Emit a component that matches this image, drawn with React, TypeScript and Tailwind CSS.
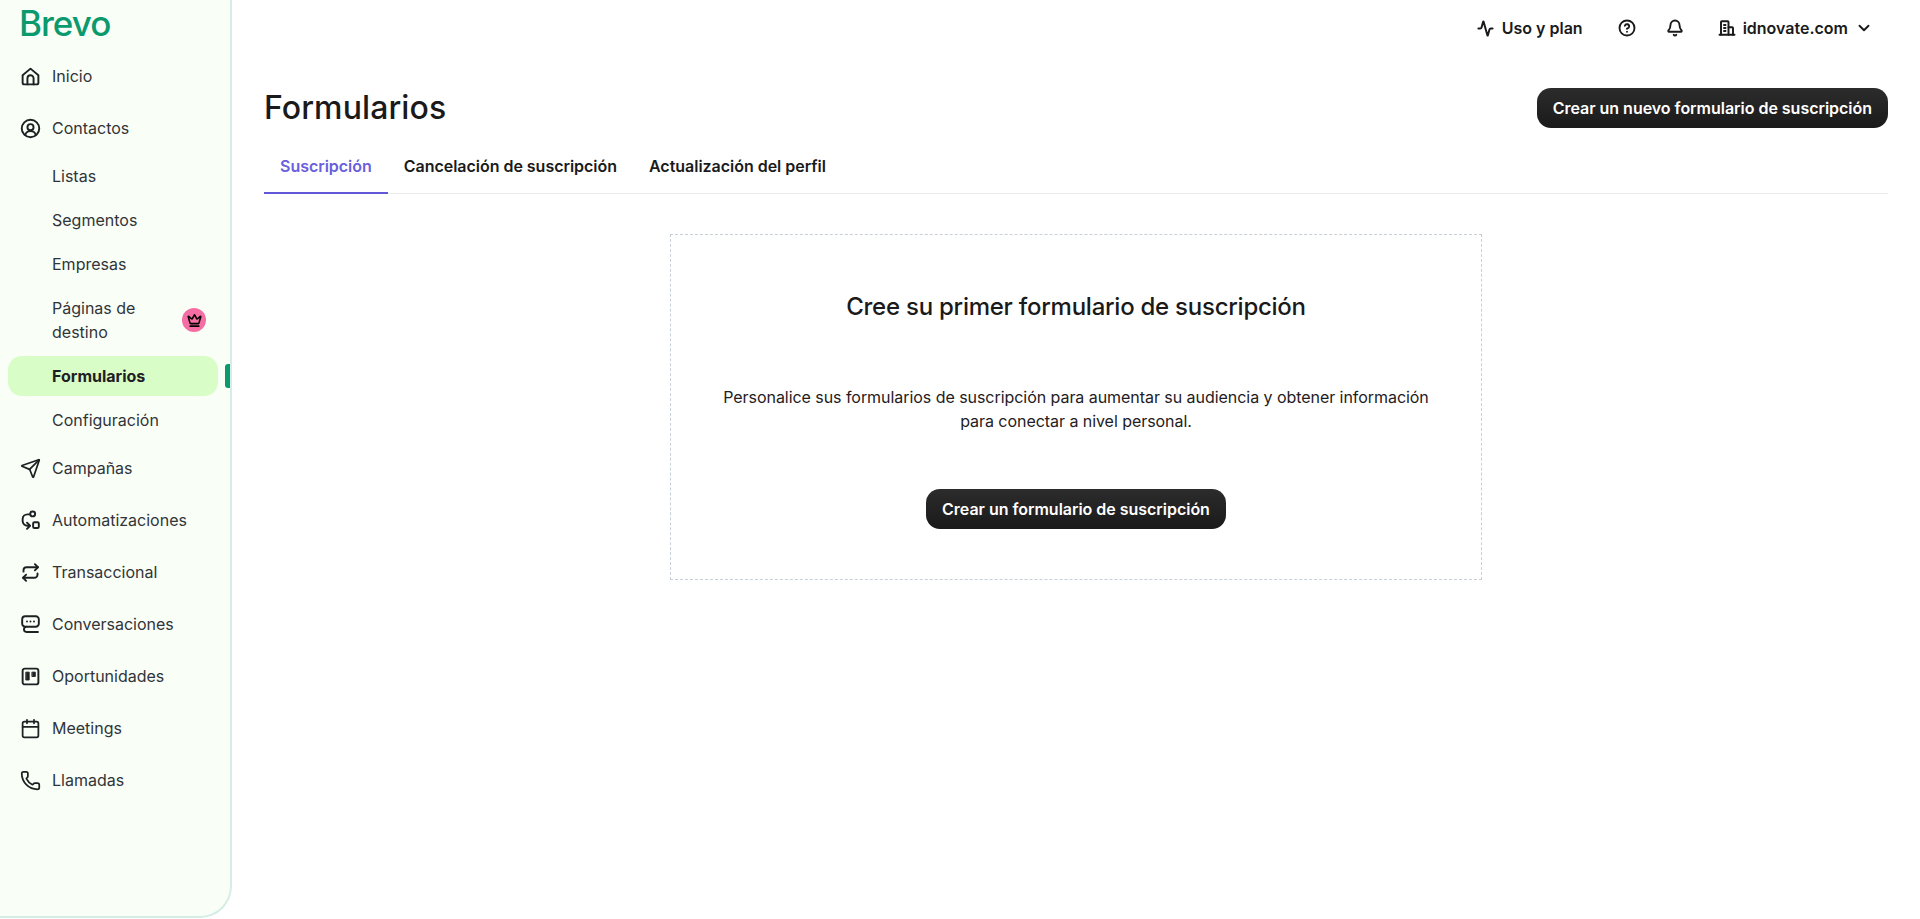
import { Activity, Bell, Calendar, ChevronDown, CircleHelp, Crown, Phone, Send } from 'lucide-react';

type IconProps = { className?: string };

function Svg({ className, children }: IconProps & { children: React.ReactNode }) {
  return (
    <svg
      className={className}
      viewBox="0 0 24 24"
      fill="none"
      stroke="currentColor"
      strokeWidth={2.2}
      strokeLinecap="round"
      strokeLinejoin="round"
    >
      {children}
    </svg>
  );
}

const HomeIcon = ({ className }: IconProps) => (
  <Svg className={className}>
    <path d="M3 10.5 12 3l9 7.5V19a2 2 0 0 1-2 2H5a2 2 0 0 1-2-2z" />
    <path d="M8.5 21v-7a3.5 3.5 0 0 1 7 0v7" />
  </Svg>
);

const ContactIcon = ({ className }: IconProps) => (
  <Svg className={className}>
    <circle cx="12" cy="12" r="10" />
    <circle cx="12" cy="10.5" r="3.5" />
    <path d="M6 19.5c.6-3 3-4.5 6-4.5s5.400 1.500 6 4.500" />
  </Svg>
);

const AutomationIcon = ({ className }: IconProps) => (
  <Svg className={className}>
    <circle cx="14.500" cy="4.500" r="2.800" />
    <rect x="15" y="14" width="6.500" height="6.500" rx="1.500" />
    <path d="M11.500 5H8.500A5.500 5.500 0 0 0 3 10.500v2A5.500 5.500 0 0 0 8.500 18H11" />
    <path d="m8 14.500 3.500 3.500L8 21.500" />
  </Svg>
);

const TransactionIcon = ({ className }: IconProps) => (
  <Svg className={className}>
    <path d="m17 2.500 3.500 3.500L17 9.500" />
    <path d="M4 11V9.500A3.500 3.500 0 0 1 7.500 6h13" />
    <path d="m7 21.500-3.500-3.500L7 14.500" />
    <path d="M20 13v1.500a3.500 3.500 0 0 1-3.500 3.500h-13" />
  </Svg>
);

const ChatIcon = ({ className }: IconProps) => (
  <Svg className={className}>
    <path d="M7 14.500H6a3.500 3.500 0 0 1-3.500-3.500V6A3.500 3.500 0 0 1 6 2.500h12A3.500 3.500 0 0 1 21.500 6v5a3.500 3.500 0 0 1-3.500 3.500H7.500a3 3 0 0 0 0 6h13" />
    <path d="M8 8.500h.01M12 8.500h.01M16 8.500h.01" />
  </Svg>
);

const BoardIcon = ({ className }: IconProps) => (
  <Svg className={className}>
    <rect x="3" y="3" width="18" height="18" rx="2.500" />
    <rect x="7" y="7" width="3.500" height="9" fill="currentColor" strokeWidth={1} />
    <rect x="14" y="7" width="3.500" height="5" fill="currentColor" strokeWidth={1} />
  </Svg>
);

const BuildingIcon = ({ className }: IconProps) => (
  <Svg className={className}>
    <path d="M4 21V4a1 1 0 0 1 1-1h8a1 1 0 0 1 1 1v17" strokeWidth={2.6} />
    <path d="M14 11h5a1 1 0 0 1 1 1v9" strokeWidth={2.6} />
    <path d="M2 21h20" strokeWidth={2.6} />
    <path d="M8 8h2M8 12h2M8 16h2" strokeWidth={2.6} />
  </Svg>
);

function NavItem({ label, icon: Icon }: { label: string; icon: React.ComponentType<IconProps> }) {
  return (
    <div className="flex h-[52px] items-center pl-[20px]">
      <Icon className="h-[21px] w-[21px] shrink-0 text-[#1f2023]" />
      <span className="ml-[11px] text-[16px] text-[#31343a]">{label}</span>
    </div>
  );
}

function SubItem({ label }: { label: string }) {
  return (
    <div className="flex h-[44px] items-center pl-[52px] text-[16px] text-[#31343a]">{label}</div>
  );
}

function DarkButton({ label }: { label: string }) {
  return (
    <button className="flex h-[40px] items-center rounded-[14px] bg-gradient-to-b from-[#2c2c2c] to-[#1a1a1a] px-4 text-[16px] font-semibold tracking-[-0.025px] text-white">
      {label}
    </button>
  );
}

function Sidebar() {
  return (
    <aside className="h-[918px] w-[232px] shrink-0 rounded-br-[32px] border-r-2 border-b-2 border-[#d6ece6] bg-[#f9fff6]">
      <div className="flex h-[50px] items-start pl-[19px] pt-[1px] text-[35px] leading-[44px] font-medium tracking-[-1px] text-[#0b996e]">
        Brevo
      </div>
      <NavItem label="Inicio" icon={HomeIcon} />
      <NavItem label="Contactos" icon={ContactIcon} />
      <SubItem label="Listas" />
      <SubItem label="Segmentos" />
      <SubItem label="Empresas" />
      <div className="flex h-[68px] items-center pl-[52px] text-[16px] leading-[24px] text-[#31343a]">
        <span className="w-[110px]">Páginas de destino</span>
        <span className="ml-[20px] flex h-[24px] w-[24px] items-center justify-center rounded-full bg-[#f56ea3]">
          <Crown className="h-[15px] w-[15px] text-black" strokeWidth={2.500} />
        </span>
      </div>
      <div className="relative h-[44px] pt-[2px]">
        <div className="ml-[8px] flex h-[40px] w-[210px] items-center rounded-[14px] bg-[#d8fdc7] pl-[44px] text-[16px] font-bold text-[#1f2023]">
          Formularios
        </div>
        <div className="absolute right-0 top-[10px] h-[24px] w-[5px] rounded-l-[3px] bg-[#0b996e]" />
      </div>
      <SubItem label="Configuración" />
      <NavItem label="Campañas" icon={Send} />
      <NavItem label="Automatizaciones" icon={AutomationIcon} />
      <NavItem label="Transaccional" icon={TransactionIcon} />
      <NavItem label="Conversaciones" icon={ChatIcon} />
      <NavItem label="Oportunidades" icon={BoardIcon} />
      <NavItem label="Meetings" icon={Calendar} />
      <NavItem label="Llamadas" icon={Phone} />
    </aside>
  );
}

function TopBar() {
  return (
    <div className="flex h-[56px] items-center justify-end pr-[47px] text-[16px] font-semibold text-[#1a1a1a]">
      <Activity className="h-[17px] w-[17px]" strokeWidth={2.800} />
      <span className="ml-[8px]">Uso y plan</span>
      <CircleHelp className="ml-[35px] h-[18px] w-[18px]" strokeWidth={2.500} />
      <Bell className="ml-[30px] h-[18px] w-[18px]" strokeWidth={2.500} />
      <BuildingIcon className="ml-[34px] h-[18px] w-[18px]" />
      <span className="ml-[7px]">idnovate.com</span>
      <ChevronDown className="ml-[7px] h-[18px] w-[18px]" strokeWidth={2.500} />
    </div>
  );
}

function Tabs() {
  return (
    <div className="flex h-[50px] border-b border-[#eaecef] text-[16px] font-semibold tracking-[-0.025px] text-[#1a1a1a]">
      <div className="flex h-[50px] items-center border-b-2 border-[#6257d9] px-4 pb-[5px] text-[#6a5fdc]">Suscripción</div>
      <div className="flex h-[50px] items-center px-4 pb-[7px]">Cancelación de suscripción</div>
      <div className="flex h-[50px] items-center px-4 pb-[7px]">Actualización del perfil</div>
    </div>
  );
}

export default function App() {
  return (
    <div className="flex h-screen overflow-hidden bg-white font-['Inter',sans-serif]">
      <Sidebar />
      <main className="min-w-0 flex-1">
        <TopBar />
        <div className="mt-[16px] pl-[32px] pr-[32px]">
          <div className="flex h-[72px] items-center justify-between">
            <h1 className="text-[32px] font-medium tracking-[0.1px] text-[#1a1a1a]">Formularios</h1>
            <DarkButton label="Crear un nuevo formulario de suscripción" />
          </div>
          <Tabs />
          <section className="mx-auto mt-[40px] flex h-[346px] w-[812px] flex-col items-center border border-dashed border-[#c9d0d8] text-center">
            <h2 className="mt-[55px] text-[24px] leading-[34px] font-medium tracking-[-0.25px] text-[#1a1a1a]">
              Cree su primer formulario de suscripción
            </h2>
            <p className="mt-[61px] w-[730px] text-[16px] leading-[24px] tracking-[-0.05px] text-[#1f2023]">
              Personalice sus formularios de suscripción para aumentar su audiencia y obtener información para conectar a nivel personal.
            </p>
            <div className="mt-[56px]">
              <DarkButton label="Crear un formulario de suscripción" />
            </div>
          </section>
        </div>
      </main>
    </div>
  );
}
